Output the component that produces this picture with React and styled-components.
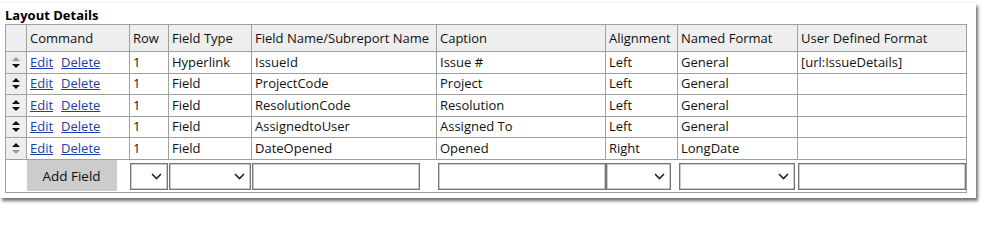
import React from 'react'
import styled, { createGlobalStyle } from 'styled-components'

const Global = createGlobalStyle`
  body {
    margin: 0;
    background: #fff;
    font-family: "Open Sans", "Liberation Sans", sans-serif;
    font-size: 13px;
    color: #111;
  }
`

const Page = styled.div`
  padding: 3px 0 12px 0;
`

const Panel = styled.div`
  width: 976px;
  height: 195px;
  padding: 3px 0 0 5px;
  box-sizing: border-box;
  background: #fff;
  box-shadow: 2px 3px 3px rgba(0,0,0,0.55), 0 -1px 2px rgba(0,0,0,0.06);
`

const Title = styled.div`
  font-weight: 700;
  font-size: 13px;
  line-height: 18px;
  color: #000;
`

const Grid = styled.table`
  border-collapse: collapse;
  table-layout: fixed;
  width: 961px;
  font-size: 13px;
  line-height: 17px;
`

const Th = styled.th`
  background: #eee;
  border: 1px solid #a0a0a0;
  height: 26px;
  padding: 0 0 0 3px;
  text-align: left;
  font-weight: 400;
  color: #111;
  white-space: nowrap;
  overflow: hidden;
`

const Td = styled.td`
  border: 1px solid #a0a0a0;
  height: 20.5px;
  padding: 0 0 0 3px;
  white-space: nowrap;
  overflow: hidden;
  background: ${p => (p.$handle ? '#eee' : '#fff')};
`

const AddTd = styled.td`
  border: 1px solid #a0a0a0;
  border-width: ${p => (p.$plain ? '1px 0 1px 1px' : p.$last ? '1px 1px 1px 0' : '1px 0')};
  height: 32px;
  padding: 0;
  vertical-align: middle;
`

const Link = styled.a`
  color: #1b3ea8;
  text-decoration: underline;
  margin-right: 8px;
  cursor: pointer;
`

const Mover = styled.div`
  display: flex;
  flex-direction: column;
  align-items: center;
  gap: 3px;
  padding-right: 3px;
`

const Tri = styled.span`
  width: 0;
  height: 0;
  border-left: 4px solid transparent;
  border-right: 4px solid transparent;
  ${p => (p.$up ? 'border-bottom' : 'border-top')}: 4px solid ${p => (p.$off ? '#9a9a9a' : '#111')};
`

const AddButton = styled.button`
  display: block;
  width: 90px;
  height: 31px;
  border: none;
  background: #ccc;
  font-family: inherit;
  font-size: 13.5px;
  color: #111;
  padding: 0;
`

const Select = styled.div`
  box-sizing: border-box;
  height: 27px;
  margin-top: 1px;
  width: ${p => p.$w}px;
  margin-left: ${p => p.$ml || 0}px;
  border: 1px solid #767676;
  box-shadow: inset 0 0 0 0.5px #999;
  display: flex;
  align-items: center;
  justify-content: flex-end;
  padding-right: 5px;
  background: #fff;
`

const Input = styled.div`
  box-sizing: border-box;
  height: 27px;
  margin-top: 1px;
  width: ${p => p.$w}px;
  margin-left: ${p => p.$ml || 0}px;
  border: 1px solid #767676;
  box-shadow: inset 0 0 0 0.5px #999;
  background: #fff;
`

const Chevron = () => (
  <svg width="11" height="7" viewBox="0 0 11 7">
    <polyline points="1,1 5.5,5.5 10,1" fill="none" stroke="#222" strokeWidth="1.6" />
  </svg>
)

const cols = [21, 103, 39, 83, 185, 169, 72, 120, 169]
const heads = ['', 'Command', 'Row', 'Field Type', 'Field Name/Subreport Name', 'Caption', 'Alignment', 'Named Format', 'User Defined Format']

const rows = [
  ['Hyperlink', 'IssueId', 'Issue #', 'Left', 'General', '[url:IssueDetails]'],
  ['Field', 'ProjectCode', 'Project', 'Left', 'General', ''],
  ['Field', 'ResolutionCode', 'Resolution', 'Left', 'General', ''],
  ['Field', 'AssignedtoUser', 'Assigned To', 'Left', 'General', ''],
  ['Field', 'DateOpened', 'Opened', 'Right', 'LongDate', ''],
]

export default function App() {
  return (
    <Page>
      <Global />
      <Panel>
        <Title>Layout Details</Title>
        <Grid>
          <colgroup>
            {cols.map((w, i) => <col key={i} style={{ width: w }} />)}
          </colgroup>
          <thead>
            <tr>{heads.map((h, i) => <Th key={i}>{h}</Th>)}</tr>
          </thead>
          <tbody>
            {rows.map((r, i) => (
              <tr key={i}>
                <Td $handle>
                  <Mover>
                    <Tri $up $off={i === 0} />
                    <Tri $off={i === rows.length - 1} />
                  </Mover>
                </Td>
                <Td><Link>Edit</Link><Link>Delete</Link></Td>
                <Td>1</Td>
                {r.map((c, j) => <Td key={j}>{c}</Td>)}
              </tr>
            ))}
            <tr>
              <AddTd $plain />
              <AddTd><AddButton>Add Field</AddButton></AddTd>
              <AddTd><Select $w={38}><Chevron /></Select></AddTd>
              <AddTd><Select $w={82}><Chevron /></Select></AddTd>
              <AddTd><Input $w={168} /></AddTd>
              <AddTd><Input $w={168} $ml={1} /></AddTd>
              <AddTd><Select $w={65}><Chevron /></Select></AddTd>
              <AddTd><Select $w={116} $ml={1}><Chevron /></Select></AddTd>
              <AddTd $last><Input $w={168} /></AddTd>
            </tr>
          </tbody>
        </Grid>
      </Panel>
    </Page>
  )
}
